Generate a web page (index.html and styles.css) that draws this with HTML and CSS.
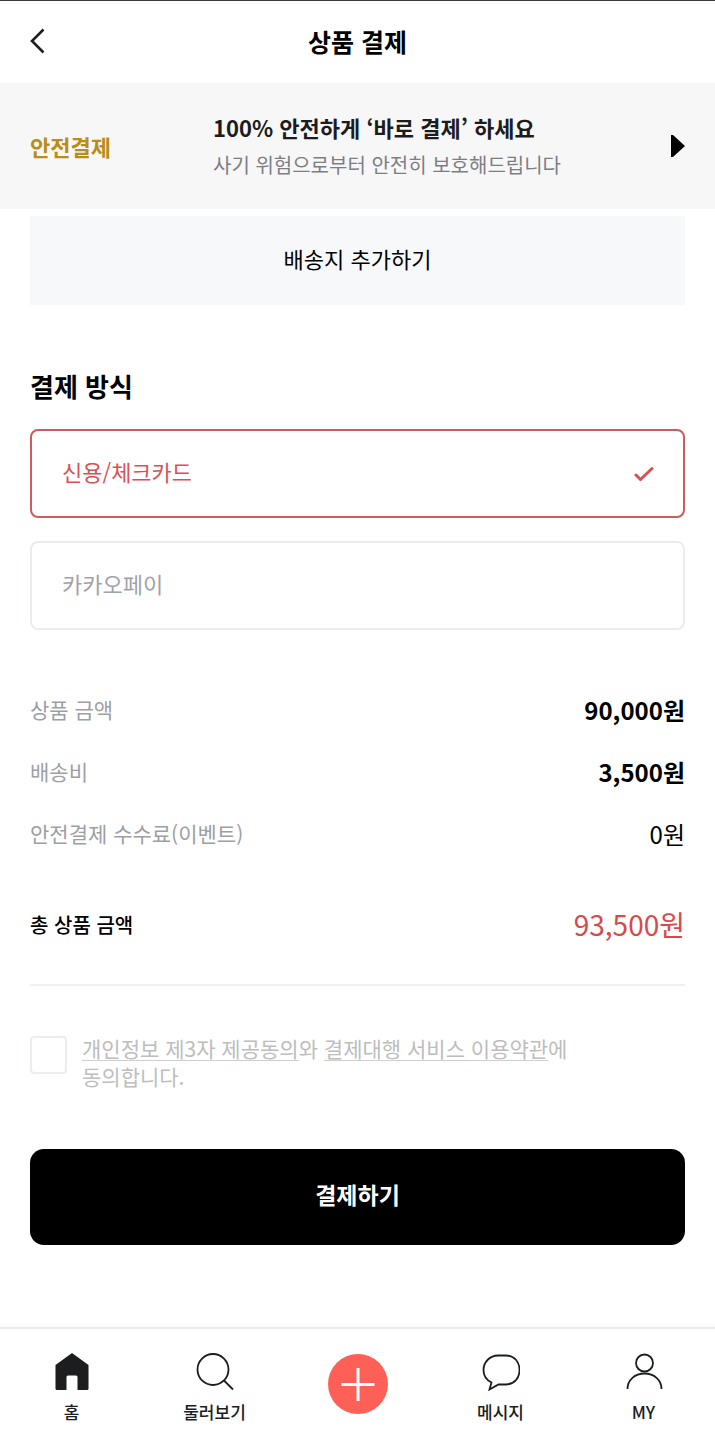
FILE: index.html
```html
<!DOCTYPE html>
<html lang="ko">
<head>
<meta charset="utf-8">
<meta name="viewport" content="width=device-width, initial-scale=1">
<title>상품 결제</title>
<link rel="stylesheet" href="styles.css">
</head>
<body>
<div class="app">
  <header class="header">
    <button class="back" type="button" aria-label="뒤로">
      <svg class="back-icon" viewBox="0 0 16 28"><path d="M13.500 2.500 2 14l11.500 11.500"/></svg>
    </button>
    <h1 class="title">상품 결제</h1>
  </header>

  <a class="banner" href="#safe">
    <strong class="banner-tag">안전결제</strong>
    <span class="banner-text">
      <strong class="banner-head">100% 안전하게 ‘바로 결제’ 하세요</strong>
      <span class="banner-sub">사기 위험으로부터 안전히 보호해드립니다</span>
    </span>
    <svg class="banner-arrow" viewBox="0 0 15 24"><path d="M1 1h2l12 11L3 23H1z"/></svg>
  </a>

  <main class="main">
    <button class="address" type="button">배송지 추가하기</button>

    <h2 class="section-title" id="method">결제 방식</h2>
    <div class="methods" role="radiogroup" aria-labelledby="method">
      <label class="method">
        <input class="method-input" type="radio" name="method" checked>
        <span>신용/체크카드</span>
        <svg class="check" viewBox="0 0 20 16"><path d="M2 9 6.500 13.500 18 2.500"/></svg>
      </label>
      <label class="method">
        <input class="method-input" type="radio" name="method">
        <span>카카오페이</span>
        <svg class="check" viewBox="0 0 20 16"><path d="M2 9 6.500 13.500 18 2.500"/></svg>
      </label>
    </div>

    <dl class="prices">
      <div class="row"><dt>상품 금액</dt><dd class="strong">90,000원</dd></div>
      <div class="row"><dt>배송비</dt><dd class="strong">3,500원</dd></div>
      <div class="row"><dt>안전결제 수수료(이벤트)</dt><dd>0원</dd></div>
      <div class="row total"><dt>총 상품 금액</dt><dd>93,500원</dd></div>
    </dl>

    <div class="agree">
      <input class="agree-box" type="checkbox" id="agree">
      <label class="agree-text" for="agree"><a href="#privacy">개인정보 제3자 제공동의</a>와 <a href="#terms">결제대행 서비스 이용약관</a>에<br>동의합니다.</label>
    </div>

    <button class="pay" type="button">결제하기</button>
  </main>

  <nav class="tabs">
    <a class="tab" href="#home">
      <svg class="tab-icon" viewBox="0 0 38 38"><path class="solid" d="M19 0 35.500 12v23.500q0 1.500-1.500 1.500H24.500V24q0-1.500-1.500-1.500h-8q-1.500 0-1.500 1.500v13H4q-1.500 0-1.500-1.500V12z"/></svg>
      <span>홈</span>
    </a>
    <a class="tab" href="#browse">
      <svg class="tab-icon" viewBox="0 0 38 38"><circle cx="17" cy="16.500" r="15.500"/><path d="M28 27.500 37 36.500"/></svg>
      <span>둘러보기</span>
    </a>
    <a class="tab tab-add" href="#add" aria-label="등록">
      <svg class="add-icon" viewBox="0 0 60 60"><circle cx="30" cy="30" r="30"/><path d="M30 14v33M13.500 30.500h33"/></svg>
    </a>
    <a class="tab" href="#messages">
      <svg class="tab-icon" viewBox="0 0 38 38"><path d="M16 2.500h8C32.500 2.500 37.500 9 37.500 17s-5 14-13.500 14.500H16.500L7.500 36.500 9.500 29.500C4.500 27 1.500 22.500 1.500 17 1.500 9 8 2.500 16 2.500z"/></svg>
      <span>메시지</span>
    </a>
    <a class="tab" href="#my">
      <svg class="tab-icon" viewBox="0 0 38 38"><circle cx="19.500" cy="10" r="8.500"/><path d="M2.500 36C2.500 27 10 20.500 19.500 20.500S36.500 27 36.500 36"/></svg>
      <span>MY</span>
    </a>
  </nav>
</div>
</body>
</html>
```
FILE: styles.css
```css
* {
  box-sizing: border-box;
}

body {
  margin: 0;
  background: #fff;
  color: #000;
  font-family: "Noto Sans CJK KR", sans-serif;
  font-size: 21px;
  line-height: 28px;
}

button {
  border: 0;
  font: inherit;
  color: inherit;
  cursor: pointer;
}

a {
  color: inherit;
  text-decoration: none;
}

svg {
  display: block;
  flex: none;
}

.app {
  min-height: 100vh;
  display: flex;
  flex-direction: column;
}

.header {
  display: grid;
  grid-template-columns: 1fr auto 1fr;
  align-items: center;
  padding: 21px 30px 23px;
  border-top: 1px solid #3c3a3b;
}

.back {
  justify-self: start;
  padding: 0;
  background: none;
}

.back-icon {
  width: 16px;
  height: 28px;
  fill: none;
  stroke: #231d1d;
  stroke-width: 2.6;
}

.title {
  margin: 0;
  font-size: 25px;
  line-height: 38px;
}

.banner {
  display: grid;
  grid-template-columns: 183px 1fr auto;
  align-items: center;
  padding: 26px 30px;
  background: #f7f7f7;
}

.banner-tag {
  color: #b98d18;
  font-size: 22px;
}

.banner-text {
  display: grid;
  line-height: 37px;
}

.banner-head {
  color: #1b1c1d;
  font-size: 22px;
}

.banner-sub {
  color: #7b7f85;
  font-size: 20px;
}

.banner-arrow {
  width: 15px;
  height: 24px;
}

.main {
  padding: 7px 30px 0;
}

.address {
  width: 100%;
  padding: 28px 30px 32px;
  background: #f6f8fa;
  font-size: 22px;
  line-height: 29px;
}

.section-title {
  margin: 61px 0 23px;
  font-size: 26px;
  line-height: 40px;
}

.methods {
  display: grid;
  gap: 23px;
}

.method {
  display: flex;
  align-items: center;
  justify-content: space-between;
  padding: 26px 29px 30px 30px;
  border: 2px solid #ebeded;
  border-radius: 8px;
  color: #9fa2a7;
  font-size: 22px;
  line-height: 29px;
  cursor: pointer;
}

.method:has(:checked) {
  border-color: #cd5c5f;
  color: #da5155;
}

.method-input {
  position: absolute;
  opacity: 0;
}

.check {
  width: 20px;
  height: 16px;
  margin-top: 4px;
  fill: none;
  stroke: currentColor;
  stroke-width: 3;
  stroke-linecap: round;
  stroke-linejoin: round;
  visibility: hidden;
}

:checked ~ .check {
  visibility: visible;
}

.prices {
  display: grid;
  gap: 25px;
  margin: 61px 0 0;
  padding-bottom: 41px;
  border-bottom: 2px solid #f0f0f0;
}

.row {
  display: flex;
  justify-content: space-between;
  line-height: 37px;
}

.row dt {
  color: #9c9fa5;
}

.row dd {
  margin: 0;
  font-size: 24px;
}

.row .strong {
  font-weight: 700;
}

.total {
  margin-top: 29px;
}

.total dt {
  color: #000;
  font-size: 20px;
  font-weight: 500;
}

.total dd {
  color: #da484c;
  font-size: 28px;
}

.agree {
  display: flex;
  align-items: flex-start;
  gap: 15px;
  margin-top: 48px;
}

.agree-box {
  appearance: none;
  flex: none;
  width: 37px;
  height: 38px;
  margin: 2px 0 0;
  border: 2px solid #ebeeed;
  border-radius: 4px;
}

.agree-box:checked {
  background: #da5155;
}

.agree-text {
  color: #bdbdbd;
}

.agree-text a {
  text-decoration: underline 1px #cfcfcf;
  text-underline-offset: 3px;
}

.pay {
  width: 100%;
  margin-top: 59px;
  padding: 27px 30px 33px;
  border-radius: 14px;
  background: #000;
  color: #fff;
  font-size: 23px;
  font-weight: 700;
  line-height: 36px;
}

.tabs {
  display: grid;
  grid-template-columns: repeat(5, 1fr);
  margin-top: auto;
  padding: 24px 0 16px;
  border-top: 2px solid #ebebeb;
  box-shadow: 0 -2px 4px #f8f8f8;
}

.tab {
  display: flex;
  flex-direction: column;
  align-items: center;
  gap: 8px;
  color: #1b1d1f;
  font-size: 17px;
  font-weight: 500;
  line-height: 25px;
}

.tab-icon {
  width: 38px;
  height: 38px;
  fill: none;
  stroke: #1b1d1f;
  stroke-width: 1.8;
}

.tab-icon .solid {
  fill: #1b1d1f;
  stroke: none;
}

.tab-add {
  padding-top: 1px;
}

.add-icon {
  width: 60px;
  height: 60px;
  fill: #fe6058;
}

.add-icon path {
  stroke: #fff;
  stroke-width: 3;
}
```
